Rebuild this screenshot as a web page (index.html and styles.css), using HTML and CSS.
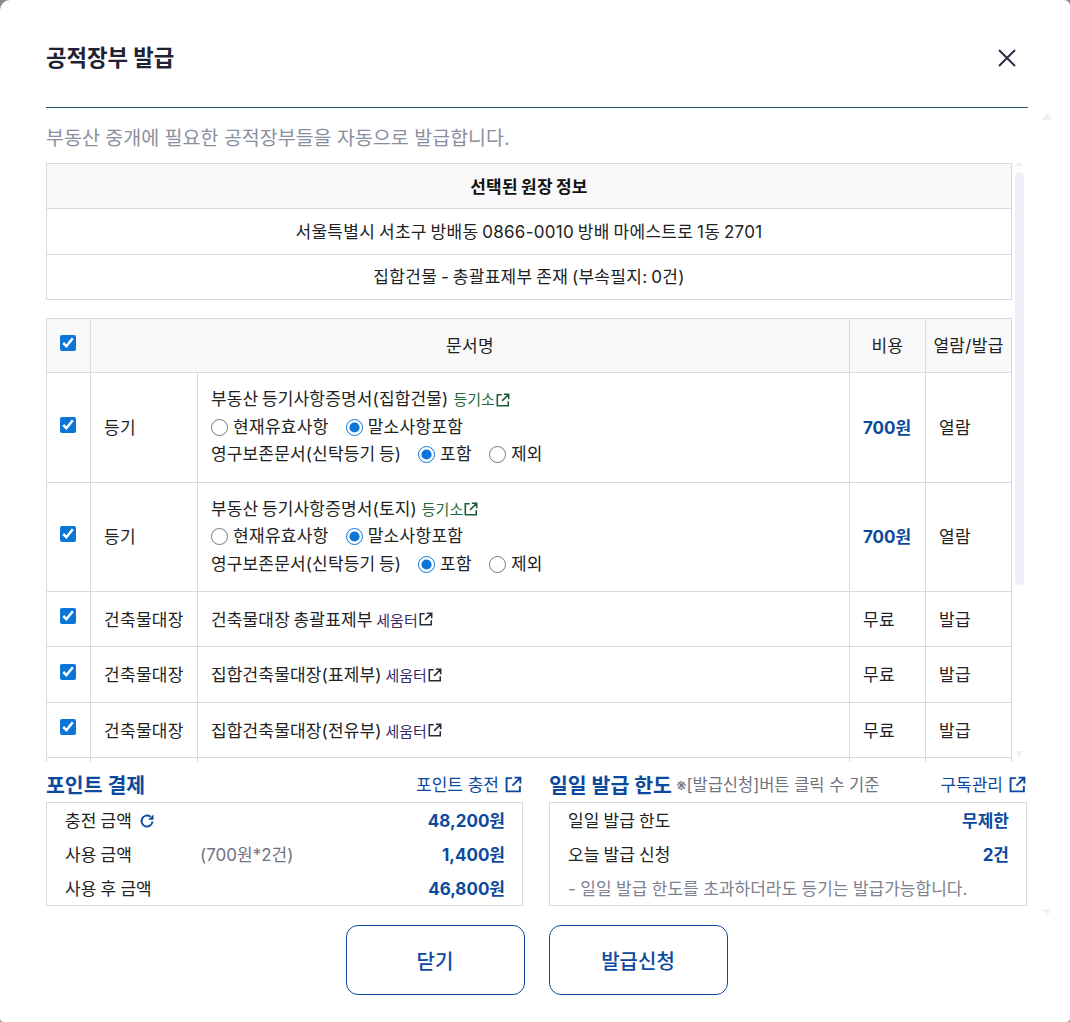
FILE: index.html
```html
<!DOCTYPE html>
<html lang="ko">
<head>
    <meta charset="utf-8">
    <title>공적장부 발급</title>
    <link rel="stylesheet" href="styles.css">
</head>
<body>
<svg width="0" height="0" class="svg-defs">
    <symbol id="ext" viewBox="0 0 16 16">
        <path d="M6.500 2H1.500v12.500h12.500V9.500M9 1.500h5.500V7M14.500 1.500L7 9" fill="none" stroke="currentColor" stroke-width="1.800"/>
    </symbol>
</svg>
<div class="modal">
    <div class="modal-header">
        <h1>공적장부 발급</h1>
        <button class="close-btn" aria-label="닫기">
            <svg width="20" height="20" viewBox="0 0 20 20"><path d="M2 2L18 18M18 2L2 18" stroke="#2a2d45" stroke-width="2" fill="none"/></svg>
        </button>
    </div>
    <p class="subtitle">부동산 중개에 필요한 공적장부들을 자동으로 발급합니다.</p>

    <div class="scroll-area">
        <div class="scroll-content">
            <table class="info-table">
                <tr><th>선택된 원장 정보</th></tr>
                <tr><td>서울특별시 서초구 방배동 0866-0010 방배 마에스트로 1동 2701</td></tr>
                <tr><td>집합건물 - 총괄표제부 존재 (부속필지: 0건)</td></tr>
            </table>

            <table class="doc-table">
                <colgroup>
                    <col class="col-check"><col class="col-type"><col class="col-name"><col class="col-cost"><col class="col-view">
                </colgroup>
                <tr class="row-head">
                    <th class="center"><input type="checkbox" checked></th>
                    <th colspan="2">문서명</th>
                    <th>비용</th>
                    <th>열람/발급</th>
                </tr>
                <tr class="row-first">
                    <td class="center"><input type="checkbox" checked></td>
                    <td>등기</td>
                    <td>
                        <div class="doc-line"><span class="doc-title">부동산 등기사항증명서(집합건물)</span> <a class="src src-green">등기소<svg class="ext-sm"><use href="#ext"/></svg></a></div>
                        <div class="doc-line">
                            <label class="radio"><input type="radio" name="a1">현재유효사항</label>
                            <label class="radio"><input type="radio" name="a1" checked>말소사항포함</label>
                        </div>
                        <div class="doc-line">
                            <span class="keep-label">영구보존문서(신탁등기 등)</span>
                            <label class="radio"><input type="radio" name="b1" checked>포함</label>
                            <label class="radio"><input type="radio" name="b1">제외</label>
                        </div>
                    </td>
                    <td class="price">700원</td>
                    <td>열람</td>
                </tr>
                <tr class="row-tall">
                    <td class="center"><input type="checkbox" checked></td>
                    <td>등기</td>
                    <td>
                        <div class="doc-line"><span class="doc-title">부동산 등기사항증명서(토지)</span> <a class="src src-green">등기소<svg class="ext-sm"><use href="#ext"/></svg></a></div>
                        <div class="doc-line">
                            <label class="radio"><input type="radio" name="a2">현재유효사항</label>
                            <label class="radio"><input type="radio" name="a2" checked>말소사항포함</label>
                        </div>
                        <div class="doc-line">
                            <span class="keep-label">영구보존문서(신탁등기 등)</span>
                            <label class="radio"><input type="radio" name="b2" checked>포함</label>
                            <label class="radio"><input type="radio" name="b2">제외</label>
                        </div>
                    </td>
                    <td class="price">700원</td>
                    <td>열람</td>
                </tr>
                <tr class="row-single">
                    <td class="center"><input type="checkbox" checked></td>
                    <td>건축물대장</td>
                    <td><span class="doc-title">건축물대장 총괄표제부</span> <a class="src src-purple">세움터<svg class="ext-sm"><use href="#ext"/></svg></a></td>
                    <td>무료</td>
                    <td>발급</td>
                </tr>
                <tr class="row-single">
                    <td class="center"><input type="checkbox" checked></td>
                    <td>건축물대장</td>
                    <td><span class="doc-title">집합건축물대장(표제부)</span> <a class="src src-purple">세움터<svg class="ext-sm"><use href="#ext"/></svg></a></td>
                    <td>무료</td>
                    <td>발급</td>
                </tr>
                <tr class="row-single">
                    <td class="center"><input type="checkbox" checked></td>
                    <td>건축물대장</td>
                    <td><span class="doc-title">집합건축물대장(전유부)</span> <a class="src src-purple">세움터<svg class="ext-sm"><use href="#ext"/></svg></a></td>
                    <td>무료</td>
                    <td>발급</td>
                </tr>
                <tr class="row-single">
                    <td></td><td></td><td></td><td></td><td></td>
                </tr>
            </table>
        </div>
        <div class="scrollbar">
            <span class="arrow-up"></span>
            <span class="thumb"></span>
            <span class="arrow-down"></span>
        </div>
    </div>

    <div class="panels">
        <section class="panel">
            <div class="panel-head">
                <h2>포인트 결제</h2>
                <a class="panel-link">포인트 충전<svg class="ext-lg"><use href="#ext"/></svg></a>
            </div>
            <div class="panel-box">
                <div class="panel-row">
                    <span class="row-label">충전 금액
                        <svg class="refresh" viewBox="0 0 16 16"><path d="M13.500 8.500A5.500 5.500 0 1 1 11.500 3.800" fill="none" stroke="currentColor" stroke-width="1.900"/><path d="M14.500 1.500V6.800H9.200Z" fill="currentColor"/></svg>
                    </span>
                    <b>48,200원</b>
                </div>
                <div class="panel-row">
                    <span class="row-label">사용 금액</span>
                    <span class="row-note">(700원*2건)</span>
                    <b>1,400원</b>
                </div>
                <div class="panel-row">
                    <span class="row-label">사용 후 금액</span>
                    <b>46,800원</b>
                </div>
            </div>
        </section>
        <section class="panel">
            <div class="panel-head">
                <h2>일일 발급 한도</h2>
                <span class="head-note">※[발급신청]버튼 클릭 수 기준</span>
                <a class="panel-link">구독관리<svg class="ext-lg"><use href="#ext"/></svg></a>
            </div>
            <div class="panel-box">
                <div class="panel-row">
                    <span class="row-label">일일 발급 한도</span>
                    <b>무제한</b>
                </div>
                <div class="panel-row">
                    <span class="row-label">오늘 발급 신청</span>
                    <b>2건</b>
                </div>
                <div class="panel-row row-muted">- 일일 발급 한도를 초과하더라도 등기는 발급가능합니다.</div>
            </div>
        </section>
    </div>

    <div class="actions">
        <button class="action-btn">닫기</button>
        <button class="action-btn">발급신청</button>
    </div>

    <span class="outer-arrow outer-up"></span>
    <span class="outer-arrow outer-down"></span>
</div>
</body>
</html>
```

FILE: styles.css
```css
* {
    box-sizing: border-box;
}

html, body {
    margin: 0;
    height: 100%;
}

body {
    background: #8a8a8a;
    font-family: "Inter", "Noto Sans CJK KR", sans-serif;
    color: #222;
    overflow: hidden;
}

.svg-defs {
    position: absolute;
}

.modal {
    position: relative;
    width: 1070px;
    height: 1022px;
    background: #fff;
    border-radius: 10px 6px 4px 4px;
    padding: 0 42px 0 46px;
}

.modal-header {
    height: 108px;
    display: flex;
    align-items: flex-start;
    justify-content: space-between;
    padding-top: 42px;
    border-bottom: 1px solid #1b5570;
}

.modal-header h1 {
    margin: 0;
    font-size: 22.3px;
    line-height: 32px;
    font-weight: 700;
    color: #1e2233;
}

.close-btn {
    border: none;
    background: none;
    padding: 0;
    margin: 6px 11px 0 0;
    width: 20px;
    height: 20px;
}

.subtitle {
    margin: 0;
    height: 55px;
    padding-top: 15px;
    font-size: 19.5px;
    line-height: 30px;
    color: #8a8f9f;
}

/* 스크롤 영역 */
.scroll-area {
    display: flex;
    height: 599px;
    overflow: hidden;
}

.scroll-content {
    width: 966px;
    flex: none;
}

.scrollbar {
    position: relative;
    width: 9px;
    margin-left: 3px;
    height: 100%;
}

.thumb {
    position: absolute;
    top: 9px;
    left: 0;
    width: 9px;
    height: 413px;
    border-radius: 5px;
    background: #eef0f5;
}

.arrow-up, .arrow-down {
    position: absolute;
    left: 0;
    width: 0;
    height: 0;
    border-left: 4.5px solid transparent;
    border-right: 4.5px solid transparent;
}

.arrow-up {
    top: -4px;
    border-bottom: 7px solid #eef0f5;
}

.arrow-down {
    bottom: 4px;
    border-top: 7px solid #eef0f5;
}

table {
    border-collapse: collapse;
    width: 966px;
    font-size: 17px;
    letter-spacing: 0.3px;
    word-spacing: -1.3px;
}

th, td {
    border: 1px solid #d8dae0;
    font-weight: 400;
}

.info-table {
    margin-bottom: 18px;
}

.info-table th, .info-table td {
    height: 45.3px;
    text-align: center;
    padding: 0 0 2px;
}

.info-table th {
    background: #f9f9f9;
    font-weight: 700;
    color: #111;
}

.doc-table {
    table-layout: fixed;
}

.col-check { width: 44px; }
.col-type { width: 107px; }
.col-cost { width: 76px; }
.col-view { width: 86px; }

.doc-table td {
    padding: 0 13px 2px;
    vertical-align: middle;
}

.doc-table th {
    background: #f9f9f9;
    padding: 0 0 2px;
    text-align: center;
}

.doc-table .center {
    padding: 0 2px 0 0;
    text-align: center;
}

.row-head { height: 54px; }
.row-first { height: 110px; }
.row-tall { height: 109px; }
.row-single { height: 55.5px; }

input[type="checkbox"] {
    width: 16px;
    height: 16px;
    margin: 0 0 6px;
    vertical-align: middle;
    accent-color: #0b76d8;
}

.doc-line {
    height: 27.5px;
    line-height: 27px;
    white-space: nowrap;
    display: flex;
    align-items: center;
    gap: 5px;
}

.doc-line:first-child {
    margin-top: 2px;
}

.doc-title {
    letter-spacing: 0.15px;
}

.src {
    display: inline-flex;
    align-items: center;
    font-size: 15px;
    letter-spacing: 0;
}

.src-green { color: #1f6b3a; }
.src-purple { color: #3b2a6b; }

.ext-sm {
    width: 14px;
    height: 14px;
    color: #2b2b3a;
    margin-left: 1px;
}

.src-green .ext-sm { color: #1f5a36; }

.doc-line .radio {
    margin-right: 12px;
}

.radio {
    display: inline-flex;
    align-items: center;
}

.radio input {
    width: 17px;
    height: 17px;
    margin: 0 5px 0 0;
    accent-color: #0b76d8;
}

.keep-label {
    margin-right: 12px;
    letter-spacing: 0.15px;
}

.price {
    font-weight: 700;
    color: #0d4a9e;
    white-space: nowrap;
    letter-spacing: 0;
}

/* 하단 패널 */
.panels {
    display: grid;
    grid-template-columns: 477px 478px;
    gap: 26px;
    margin-top: 8px;
}

.panel-head {
    height: 32px;
    display: flex;
    align-items: center;
    padding-bottom: 5px;
}

.panel-head h2 {
    margin: 0;
    font-size: 20.5px;
    font-weight: 700;
    color: #0d4a9e;
}

.head-note {
    margin-left: 4px;
    font-size: 16.500px;
    color: #6f7380;
}

.panel-link {
    margin-left: auto;
    display: inline-flex;
    align-items: center;
    font-size: 17px;
    color: #0d4a9e;
}

.ext-lg {
    width: 17px;
    height: 17px;
    margin: 2px 1px 0 6px;
}

.panel-box {
    height: 104px;
    border: 1px solid #d8dae0;
    padding: 0 17px 0 18px;
}

.panel-row {
    height: 34px;
    padding-bottom: 2px;
    display: flex;
    align-items: center;
    font-size: 17px;
    word-spacing: -0.5px;
}

.panel-row b {
    margin-left: auto;
    font-size: 17px;
    font-weight: 700;
    color: #0d4a9e;
}

.row-label {
    display: inline-flex;
    align-items: center;
    min-width: 135px;
    color: #222;
}

.row-note {
    color: #6f7380;
}

.row-muted {
    color: #7d8190;
    word-spacing: -0.3px;
}

.refresh {
    width: 16px;
    height: 16px;
    margin-left: 7px;
    margin-top: 4px;
    color: #0d4a9e;
}

.actions {
    display: flex;
    justify-content: center;
    gap: 24px;
    margin: 19px 0 0 -1px;
}

.action-btn {
    width: 179px;
    height: 70px;
    background: #fff;
    border: 1px solid #0d4a9e;
    border-radius: 12px;
    font-family: inherit;
    font-size: 20px;
    font-weight: 500;
    color: #0d4a9e;
}

/* 바깥 스크롤 화살표 */
.outer-arrow {
    position: absolute;
    left: 1042px;
    width: 0;
    height: 0;
    border-left: 5px solid transparent;
    border-right: 5px solid transparent;
}

.outer-up {
    top: 113px;
    border-bottom: 7px solid #eef0f5;
}

.outer-down {
    top: 909px;
    border-top: 7px solid #eef0f5;
}
```
